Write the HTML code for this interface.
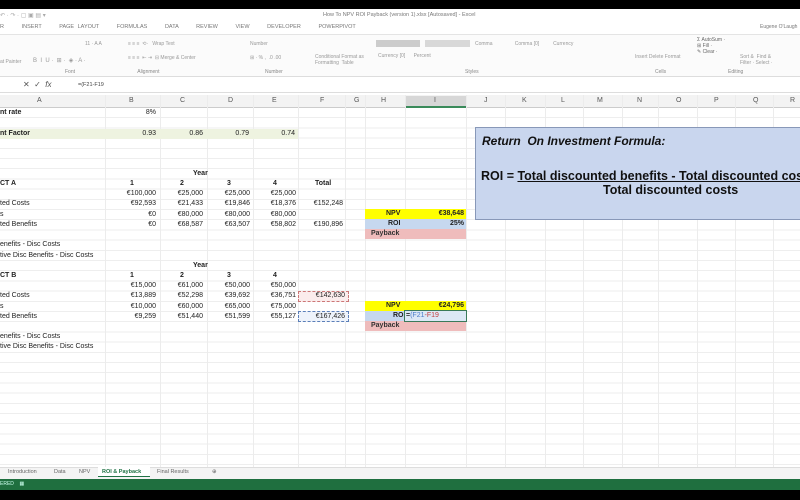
<!DOCTYPE html>
<html><head><meta charset="utf-8"><style>
*{margin:0;padding:0;box-sizing:border-box}
body{width:800px;height:500px;overflow:hidden;background:#fff;font-family:"Liberation Sans",Arial,sans-serif;position:relative;color:#222}
.a{position:absolute;white-space:nowrap}
.t{font-size:5px;color:#999}
.c{position:absolute;font-size:7px;line-height:10px;height:10px;white-space:nowrap}
.r{text-align:right}
.b{font-weight:bold}
.vl{position:absolute;top:95px;height:372px;width:1px;background:#ececec}
</style></head><body>
<div class="a" style="left:0;top:0;width:800px;height:9px;background:#000"></div>
<div class="a t" style="left:0;top:12px;color:#aaa;font-size:6px">↶ · ↷ · ▢ ▣ ▤ ▾</div>
<div class="a t" style="left:323px;top:12px;font-size:5.5px;color:#777">How To NPV ROI Payback (version 1).xlsx [Autosaved] - Excel</div>
<div class="a t" style="left:760px;top:24px;color:#777">Eugene O'Laugh</div>
<div class="a t" style="left:0;top:24px;color:#777;font-size:5.5px;word-spacing:2px">R &nbsp;&nbsp;&nbsp; INSERT &nbsp;&nbsp;&nbsp; PAGE LAYOUT &nbsp;&nbsp;&nbsp; FORMULAS &nbsp;&nbsp;&nbsp; DATA &nbsp;&nbsp;&nbsp; REVIEW &nbsp;&nbsp;&nbsp; VIEW &nbsp;&nbsp;&nbsp; DEVELOPER &nbsp;&nbsp;&nbsp; POWERPIVOT</div>
<div class="a" style="left:0;top:34px;width:800px;height:43px;background:#fbfbfb;border-top:1px solid #e4e4e4;border-bottom:1px solid #ddd"></div>
<div class="a t" style="left:0;top:59px">at Painter</div>
<div class="a t" style="left:33px;top:57px;font-size:6px">B &nbsp;I &nbsp;U · &nbsp;⊞ · &nbsp;◈ · A ·</div>
<div class="a t" style="left:85px;top:41px">11 · A A</div>
<div class="a t" style="left:128px;top:41px">≡ ≡ ≡ &nbsp;⟲· &nbsp;&nbsp;Wrap Text</div>
<div class="a t" style="left:128px;top:55px">≡ ≡ ≡ &nbsp;⇤ ⇥ &nbsp;⊟ Merge &amp; Center</div>
<div class="a t" style="left:250px;top:41px">Number</div>
<div class="a t" style="left:250px;top:55px">⊞ · % , &nbsp;.0 .00</div>
<div class="a t" style="left:315px;top:54px">Conditional Format as<br>Formatting &nbsp;Table</div>
<div class="a" style="left:376px;top:40px;width:44px;height:7px;background:#ccc"></div>
<div class="a" style="left:425px;top:40px;width:45px;height:7px;background:#d8d8d8"></div>
<div class="a t" style="left:475px;top:41px">Comma &nbsp;&nbsp;&nbsp;&nbsp;&nbsp;&nbsp;&nbsp;&nbsp;&nbsp;&nbsp;&nbsp;&nbsp;&nbsp;&nbsp; Comma [0] &nbsp;&nbsp;&nbsp;&nbsp;&nbsp;&nbsp;&nbsp;&nbsp; Currency</div>
<div class="a t" style="left:378px;top:53px">Currency [0] &nbsp;&nbsp;&nbsp;&nbsp; Percent</div>
<div class="a t" style="left:635px;top:54px">Insert Delete Format</div>
<div class="a t" style="left:697px;top:37px;color:#666">Σ AutoSum ·<br>⊞ Fill ·<br>✎ Clear ·</div>
<div class="a t" style="left:740px;top:54px">Sort &amp; &nbsp;Find &amp;<br>Filter · Select ·</div>
<div class="a t" style="left:65px;top:69px;color:#888">Font &nbsp;&nbsp;&nbsp;&nbsp;&nbsp;&nbsp;&nbsp;&nbsp;&nbsp;&nbsp;&nbsp;&nbsp;&nbsp;&nbsp;&nbsp;&nbsp;&nbsp;&nbsp;&nbsp;&nbsp;&nbsp;&nbsp;&nbsp;&nbsp;&nbsp;&nbsp;&nbsp;&nbsp;&nbsp;&nbsp;&nbsp;&nbsp;&nbsp;&nbsp;&nbsp;&nbsp;&nbsp;&nbsp;&nbsp;&nbsp;&nbsp;&nbsp;&nbsp; Alignment</div>
<div class="a t" style="left:265px;top:69px;color:#888">Number</div>
<div class="a t" style="left:465px;top:69px;color:#888">Styles</div>
<div class="a t" style="left:655px;top:69px;color:#888">Cells</div>
<div class="a t" style="left:728px;top:69px;color:#888">Editing</div>
<div class="a" style="left:0;top:78px;width:800px;height:15px;background:#fff;border-bottom:1px solid #ddd"></div>
<div class="a" style="left:23px;top:80px;font-size:8px;color:#555">✕ &nbsp;✓ &nbsp;<i>fx</i></div>
<div class="a" style="left:78px;top:82px;font-size:5.5px;color:#444">=(F21-F19</div>
<div class="a" style="left:0;top:95px;width:800px;height:13px;background:#f3f3f3;border-bottom:1px solid #ccc"></div>
<div class="a" style="left:405px;top:96px;width:61px;height:12px;background:#d7d7d7;border-bottom:2px solid #3a8a5a"></div>
<div class="a" style="left:0;top:97px;width:800px;font-size:7px;color:#555">
<span class="a" style="left:37px">A</span><span class="a" style="left:129px">B</span><span class="a" style="left:180px">C</span><span class="a" style="left:228px">D</span><span class="a" style="left:272px">E</span><span class="a" style="left:320px">F</span><span class="a" style="left:354px">G</span><span class="a" style="left:381px">H</span><span class="a" style="left:434px">I</span><span class="a" style="left:484px">J</span><span class="a" style="left:522px">K</span><span class="a" style="left:561px">L</span><span class="a" style="left:597px">M</span><span class="a" style="left:637px">N</span><span class="a" style="left:676px">O</span><span class="a" style="left:714px">P</span><span class="a" style="left:753px">Q</span><span class="a" style="left:790px">R</span></div>
<div class="a" style="left:0;top:108px;width:800px;height:359px;background:repeating-linear-gradient(to bottom,transparent 0,transparent 9.2px,#eeeeee 9.2px,#eeeeee 10.2px)"></div>
<div class="vl" style="left:105px"></div><div class="vl" style="left:160px"></div><div class="vl" style="left:207px"></div><div class="vl" style="left:253px"></div><div class="vl" style="left:298px"></div><div class="vl" style="left:345px"></div><div class="vl" style="left:365px"></div><div class="vl" style="left:405px"></div><div class="vl" style="left:466px"></div><div class="vl" style="left:505px"></div><div class="vl" style="left:545px"></div><div class="vl" style="left:583px"></div><div class="vl" style="left:622px"></div><div class="vl" style="left:658px"></div><div class="vl" style="left:697px"></div><div class="vl" style="left:735px"></div><div class="vl" style="left:773px"></div>
<div class="a" style="left:0;top:129px;width:298px;height:10px;background:#eef3e0"></div>
<div class="c b" style="left:0;top:108px">nt rate</div><div class="c r" style="left:105px;width:51px;top:108px">8%</div>
<div class="c b" style="left:0;top:129px">nt Factor</div>
<div class="c r" style="left:105px;width:51px;top:129px">0.93</div><div class="c r" style="left:160px;width:43px;top:129px">0.86</div><div class="c r" style="left:207px;width:42px;top:129px">0.79</div><div class="c r" style="left:253px;width:42px;top:129px">0.74</div>

<div class="c b" style="left:193px;top:169px">Year</div>
<div class="c b" style="left:0;top:179px">CT A</div>
<div class="c b" style="left:130px;top:179px">1</div><div class="c b" style="left:180px;top:179px">2</div><div class="c b" style="left:227px;top:179px">3</div><div class="c b" style="left:273px;top:179px">4</div><div class="c b" style="left:315px;top:179px">Total</div>
<div class="c r" style="left:105px;width:51px;top:189px">€100,000</div><div class="c r" style="left:160px;width:43px;top:189px">€25,000</div><div class="c r" style="left:207px;width:43px;top:189px">€25,000</div><div class="c r" style="left:253px;width:43px;top:189px">€25,000</div>
<div class="c" style="left:0;top:199px">ted Costs</div>
<div class="c r" style="left:105px;width:51px;top:199px">€92,593</div><div class="c r" style="left:160px;width:43px;top:199px">€21,433</div><div class="c r" style="left:207px;width:43px;top:199px">€19,846</div><div class="c r" style="left:253px;width:43px;top:199px">€18,376</div><div class="c r" style="left:298px;width:45px;top:199px">€152,248</div>
<div class="c" style="left:0;top:210px">s</div>
<div class="c r" style="left:105px;width:51px;top:210px">€0</div><div class="c r" style="left:160px;width:43px;top:210px">€80,000</div><div class="c r" style="left:207px;width:43px;top:210px">€80,000</div><div class="c r" style="left:253px;width:43px;top:210px">€80,000</div>
<div class="c" style="left:0;top:220px">ted Benefits</div>
<div class="c r" style="left:105px;width:51px;top:220px">€0</div><div class="c r" style="left:160px;width:43px;top:220px">€68,587</div><div class="c r" style="left:207px;width:43px;top:220px">€63,507</div><div class="c r" style="left:253px;width:43px;top:220px">€58,802</div><div class="c r" style="left:298px;width:45px;top:220px">€190,896</div>
<div class="c" style="left:0;top:240px">enefits - Disc Costs</div>
<div class="c" style="left:0;top:251px">tive Disc Benefits - Disc Costs</div>

<div class="c b" style="left:193px;top:261px">Year</div>
<div class="c b" style="left:0;top:271px">CT B</div>
<div class="c b" style="left:130px;top:271px">1</div><div class="c b" style="left:180px;top:271px">2</div><div class="c b" style="left:227px;top:271px">3</div><div class="c b" style="left:273px;top:271px">4</div>
<div class="c r" style="left:105px;width:51px;top:281px">€15,000</div><div class="c r" style="left:160px;width:43px;top:281px">€61,000</div><div class="c r" style="left:207px;width:43px;top:281px">€50,000</div><div class="c r" style="left:253px;width:43px;top:281px">€50,000</div>
<div class="a" style="left:298px;top:291px;width:51px;height:11px;background:#fbecec;border:1px dashed #c77"></div>
<div class="c" style="left:0;top:291px">ted Costs</div>
<div class="c r" style="left:105px;width:51px;top:291px">€13,889</div><div class="c r" style="left:160px;width:43px;top:291px">€52,298</div><div class="c r" style="left:207px;width:43px;top:291px">€39,692</div><div class="c r" style="left:253px;width:43px;top:291px">€36,751</div><div class="c r" style="left:298px;width:47px;top:291px">€142,630</div>
<div class="c" style="left:0;top:302px">s</div>
<div class="c r" style="left:105px;width:51px;top:302px">€10,000</div><div class="c r" style="left:160px;width:43px;top:302px">€60,000</div><div class="c r" style="left:207px;width:43px;top:302px">€65,000</div><div class="c r" style="left:253px;width:43px;top:302px">€75,000</div>
<div class="a" style="left:298px;top:311px;width:51px;height:11px;background:#eef3fb;border:1px dashed #5c7fb8"></div>
<div class="c" style="left:0;top:312px">ted Benefits</div>
<div class="c r" style="left:105px;width:51px;top:312px">€9,259</div><div class="c r" style="left:160px;width:43px;top:312px">€51,440</div><div class="c r" style="left:207px;width:43px;top:312px">€51,599</div><div class="c r" style="left:253px;width:43px;top:312px">€55,127</div><div class="c r" style="left:298px;width:47px;top:312px">€167,426</div>
<div class="c" style="left:0;top:332px">enefits - Disc Costs</div>
<div class="c" style="left:0;top:342px">tive Disc Benefits - Disc Costs</div>

<div class="a" style="left:365px;top:209px;width:101px;height:10px;background:#ffff00"></div>
<div class="a" style="left:365px;top:219px;width:101px;height:10px;background:#c6d8ef"></div>
<div class="a" style="left:365px;top:229px;width:101px;height:10px;background:#efbcbc"></div>
<div class="c b" style="left:386px;top:209px">NPV</div><div class="c b r" style="left:405px;width:59px;top:209px">€38,648</div>
<div class="c b" style="left:388px;top:219px">ROI</div><div class="c b r" style="left:405px;width:59px;top:219px">25%</div>
<div class="c b" style="left:371px;top:229px;color:#333">Payback</div>
<div class="a" style="left:365px;top:301px;width:101px;height:10px;background:#ffff00"></div>
<div class="a" style="left:365px;top:311px;width:101px;height:10px;background:#c6d8ef"></div>
<div class="a" style="left:365px;top:321px;width:101px;height:10px;background:#efbcbc"></div>
<div class="c b" style="left:386px;top:301px">NPV</div><div class="c b r" style="left:405px;width:59px;top:301px">€24,796</div>
<div class="c b" style="left:393px;top:311px">ROI</div>
<div class="a" style="left:404px;top:310px;width:63px;height:12px;border:1.5px solid #3a7a5a;background:#dce8f6"></div>
<div class="c" style="left:406px;top:311px"><b>=</b><span style="color:#4a7bc8">(F21</span><span style="color:#c04040">-F19</span></div>
<div class="c b" style="left:371px;top:321px;color:#333">Payback</div>

<div class="a" style="left:475px;top:127px;width:330px;height:93px;background:#c9d6ee;border:1px solid #8898b8;font-weight:bold;font-size:12.5px;color:#111">
<div class="a" style="left:6px;top:6px;font-style:italic;font-size:12px">Return &nbsp;On Investment Formula:</div>
<div class="a" style="left:5px;top:41px">ROI = <u>Total discounted benefits - Total discounted costs</u></div>
<div class="a" style="left:127px;top:55px">Total discounted costs</div>
</div>

<div class="a" style="left:0;top:467px;width:800px;height:12px;background:#f4f4f4;border-top:1px solid #ddd"></div>
<div class="a" style="left:0;top:469px;font-size:5.5px;color:#666;width:300px">
<span class="a" style="left:8px">Introduction</span><span class="a" style="left:54px">Data</span><span class="a" style="left:79px">NPV</span><span class="a" style="left:98px;width:52px;height:10px;top:-2px;background:#fff;border-bottom:1px solid #217346"></span><span class="a" style="left:102px;color:#217346;font-weight:bold">ROI &amp; Payback</span><span class="a" style="left:157px">Final Results</span><span class="a" style="left:212px">⊕</span></div>
<div class="a" style="left:0;top:479px;width:800px;height:11px;background:#1f6f3f"></div>
<div class="a" style="left:0;top:481px;font-size:5px;color:#cfe">ERED &nbsp;&nbsp;&nbsp;▦</div>
<div class="a" style="left:0;top:490px;width:800px;height:10px;background:#000"></div>
</body></html>
